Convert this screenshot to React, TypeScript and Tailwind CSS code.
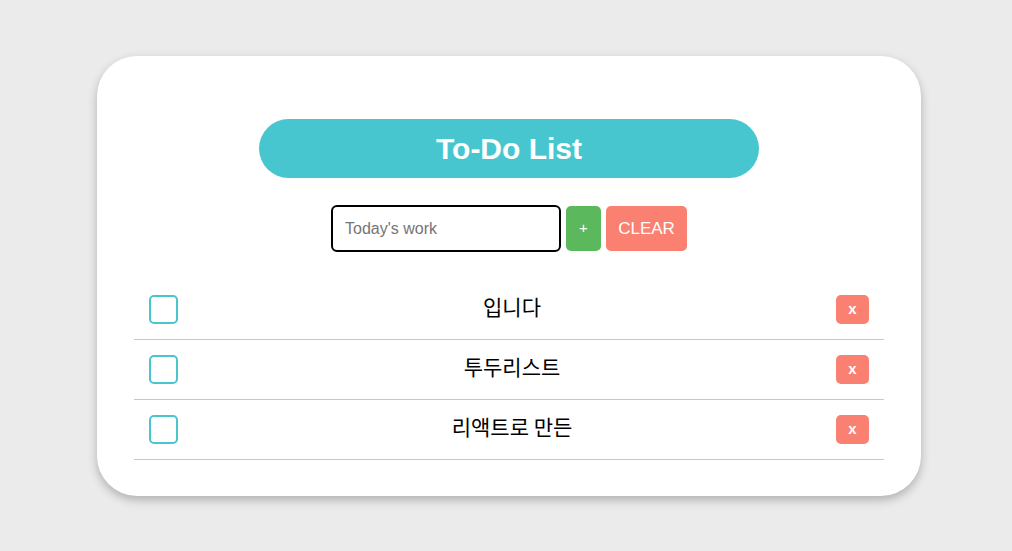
import React, { useState } from 'react'

interface Todo {
  id: number
  text: string
  done: boolean
}

const INITIAL_TODOS: Todo[] = [
  { id: 1, text: '입니다', done: false },
  { id: 2, text: '투두리스트', done: false },
  { id: 3, text: '리액트로 만든', done: false }
]

const App: React.FC = () => {
  const [todos, setTodos] = useState<Todo[]>(INITIAL_TODOS)
  const [input, setInput] = useState('')

  const addTodo = () => {
    if (!input.trim()) return
    setTodos([{ id: Date.now(), text: input.trim(), done: false }, ...todos])
    setInput('')
  }

  const toggleTodo = (id: number) => {
    setTodos(todos.map(t => (t.id === id ? { ...t, done: !t.done } : t)))
  }

  const removeTodo = (id: number) => {
    setTodos(todos.filter(t => t.id !== id))
  }

  return (
    <div className="min-h-screen bg-[#ebebeb] pt-[56px] pl-[97px] flex font-['Liberation_Sans',Arial,sans-serif]">
      <div className="w-[824px] h-[440px] bg-white rounded-[40px] shadow-[0_4px_10px_rgba(0,0,0,0.25)] px-[37px] pt-[63px] flex flex-col items-center">
        <h1 className="w-[500px] h-[59px] rounded-full bg-[#48c6d0] text-white text-[30px] font-bold flex items-center justify-center">
          To-Do List
        </h1>

        <div className="mt-[27px] flex items-center gap-[5px]">
          <input
            value={input}
            onChange={e => setInput(e.target.value)}
            onKeyDown={e => e.key === 'Enter' && addTodo()}
            placeholder="Today's work"
            className="w-[230px] h-[47px] border-2 border-black rounded-[6px] px-[12px] text-[16px] text-black placeholder:text-[#757575] outline-none"
          />
          <button
            onClick={addTodo}
            className="w-[35px] h-[45px] rounded-[5px] bg-[#5cb85c] text-white text-[15px]"
          >
            +
          </button>
          <button
            onClick={() => setTodos([])}
            className="w-[81px] h-[45px] rounded-[5px] bg-[#fa8072] text-white text-[17px]"
          >
            CLEAR
          </button>
        </div>

        <ul className="mt-[28px] w-full">
          {todos.map(todo => (
            <li
              key={todo.id}
              className="h-[60px] border-b border-[#c8c8c8] flex items-center px-[15px]"
            >
              <button
                onClick={() => toggleTodo(todo.id)}
                className={`w-[29px] h-[29px] rounded-[5px] border-2 border-[#48c6d0] shrink-0 ${todo.done ? 'bg-[#48c6d0]' : 'bg-white'}`}
              />
              <span
                className={`flex-1 pl-[10px] text-center text-[21px] text-black -mt-[6px] font-['Noto_Sans_CJK_KR','Liberation_Sans',sans-serif] ${todo.done ? 'line-through text-gray-400' : ''}`}
              >
                {todo.text}
              </span>
              <button
                onClick={() => removeTodo(todo.id)}
                className="w-[33px] h-[29px] rounded-[5px] bg-[#fa8072] text-white text-[15px] font-bold shrink-0"
              >
                x
              </button>
            </li>
          ))}
        </ul>
      </div>
    </div>
  )
}

export default App
